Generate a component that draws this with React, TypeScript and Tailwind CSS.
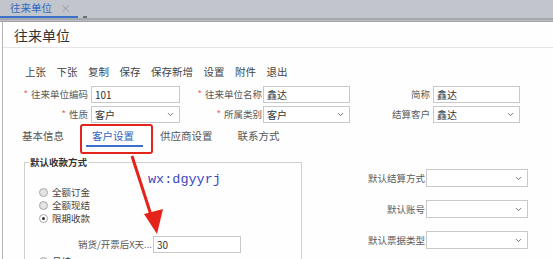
import { ChevronDown } from "lucide-react";
import { ReactNode } from "react";

function Label({ w, req, children }: { w: string; req?: boolean; children: ReactNode }) {
  return (
    <div className={`${w} shrink-0 text-right text-[9.5px] leading-[17px] text-[#5a5a5a] whitespace-nowrap`}>
      {req && <span className="mr-[3px] text-[#e86060]">*</span>}
      {children}
    </div>
  );
}

function Box({ cls, value, select }: { cls: string; value?: string; select?: boolean }) {
  return (
    <div className={`${cls} shrink-0 flex items-center border border-[#c9c9c9] bg-white pl-[3px] pr-[4px] text-[10px] text-[#333]`}>
      <span>{value}</span>
      {select && <ChevronDown className="ml-auto text-[#666]" size={9} strokeWidth={2.5} />}
    </div>
  );
}

function Radio({ checked, children }: { checked?: boolean; children: ReactNode }) {
  return (
    <div className="flex h-[13px] items-center pl-[14px] text-[9.5px] text-[#444]">
      <div className={`flex h-[9px] w-[9px] items-center justify-center rounded-full border border-[#a8a8a8] ${checked ? "bg-white" : "bg-[#e4e4e4]"}`}>
        {checked && <div className="h-[3px] w-[3px] rounded-full bg-[#333]" />}
      </div>
      <span className="ml-[4px]">{children}</span>
    </div>
  );
}

function SelectRow({ label }: { label: string }) {
  return (
    <div className="flex items-center">
      <Label w="w-[123px]">{label}</Label>
      <Box cls="ml-[1px] w-[102px] h-[18px]" select />
    </div>
  );
}

export default function App() {
  return (
    <div className="relative h-[259px] w-[553px] overflow-hidden bg-[#fefefe] font-['Noto_Sans_CJK_SC','Liberation_Sans',sans-serif]">
      {/* top tab strip */}
      <div className="flex h-[18px] bg-[#c3c5cd]">
        <div className="flex w-[78px] items-center border-b-2 border-[#3b73c9] pl-[10px] text-[10.5px] leading-[16px] text-[#2f6ac2]">
          <span>往来单位</span>
          <span className="ml-[8px] text-[11px] text-[#9a9ca4]">×</span>
        </div>
        <div className="ml-[5px] mt-[16px] h-[2px] w-[4px] bg-[#6e7076]" />
      </div>
      <div className="h-[2px] bg-[#a6a8af]" />
      <div className="h-[1px] bg-[#bcbec4]" />
      <div className="h-[1px] bg-[#a0a2a8]" />

      <div className="ml-[2px] h-[237px] border-l border-[#b5b5b5]">
        {/* title */}
        <div className="h-[26px] border-b border-[#e6e6e6] pl-[11px] text-[14px] leading-[26px] text-[#333]">往来单位</div>

        {/* toolbar */}
        <div className="mt-[17px] flex h-[14px] gap-[10.5px] pl-[22px] text-[10.5px] leading-[14px] text-[#444]">
          <span>上张</span>
          <span>下张</span>
          <span>复制</span>
          <span>保存</span>
          <span>保存新增</span>
          <span>设置</span>
          <span>附件</span>
          <span>退出</span>
        </div>

        {/* form rows */}
        <div className="mt-[7px] flex h-[17px] items-center">
          <Label w="w-[85px]" req>往来单位编码</Label>
          <Box cls="ml-[3px] w-[89px] h-[17px]" value="101" />
          <Label w="w-[82px]" req>往来单位名称</Label>
          <Box cls="ml-[1px] w-[87px] h-[17px]" value="鑫达" />
          <Label w="w-[80px]">简称</Label>
          <Box cls="ml-[3px] w-[87px] h-[17px]" value="鑫达" />
        </div>
        <div className="mt-[3px] flex h-[17px] items-center">
          <Label w="w-[85px]" req>性质</Label>
          <Box cls="ml-[3px] w-[89px] h-[17px]" value="客户" select />
          <Label w="w-[82px]" req>所属类别</Label>
          <Box cls="ml-[1px] w-[87px] h-[17px]" value="客户" select />
          <Label w="w-[80px]">结算客户</Label>
          <Box cls="ml-[3px] w-[87px] h-[17px]" value="鑫达" select />
        </div>

        {/* tabs */}
        <div className="mt-[1px] flex h-[30px] items-start text-[10.5px] leading-[12px] text-[#555]">
          <span className="ml-[19px] mt-[6px]">基本信息</span>
          <div className="ml-[16px] h-[30px] rounded-[3px] border-2 border-[#e3241d] pl-[4px] pr-[8px]">
            <div className="border-b-2 border-[#3b6fcf] pb-[3px] pl-[6px] pr-[9px] pt-[4px] text-[#2f62c0]">客户设置</div>
          </div>
          <span className="ml-[7px] mt-[6px]">供应商设置</span>
          <span className="ml-[25px] mt-[6px]">联系方式</span>
        </div>

        {/* bottom section */}
        <div className="mt-[3px] flex items-start">
          <fieldset className="ml-[21px] h-[120px] w-[278px] shrink-0 border border-[#cfcfcf]">
            <legend className="ml-[4px] px-[1px] text-[9.5px] font-bold leading-[11px] text-[#333]">默认收款方式</legend>
            <div className="pt-[18px]">
              <Radio>全额订金</Radio>
              <Radio>全额现结</Radio>
              <Radio checked>限期收款</Radio>
              <div className="mt-[11px] flex items-center">
                <Label w="w-[127px]">销货/开票后X天...</Label>
                <Box cls="ml-[1px] w-[88px] h-[17px]" value="30" />
              </div>
              <div className="mt-[2px]">
                <Radio>月结</Radio>
              </div>
            </div>
          </fieldset>
          <div className="mt-[12px] flex flex-col gap-[13px]">
            <SelectRow label="默认结算方式" />
            <SelectRow label="默认账号" />
            <SelectRow label="默认票据类型" />
          </div>
        </div>
      </div>

      {/* annotation overlay */}
      <div className="absolute left-[148px] top-[172px] font-['Liberation_Mono',monospace] text-[13.5px] leading-[16px] text-[#3a49c2]">wx:dgyyrj</div>
      <svg className="pointer-events-none absolute left-0 top-0" width="553" height="259">
        <line x1="132" y1="156" x2="151" y2="215" stroke="#e5231b" strokeWidth="3" />
        <polygon points="157,234 144,214 163,209" fill="#e5231b" />
      </svg>
    </div>
  );
}
